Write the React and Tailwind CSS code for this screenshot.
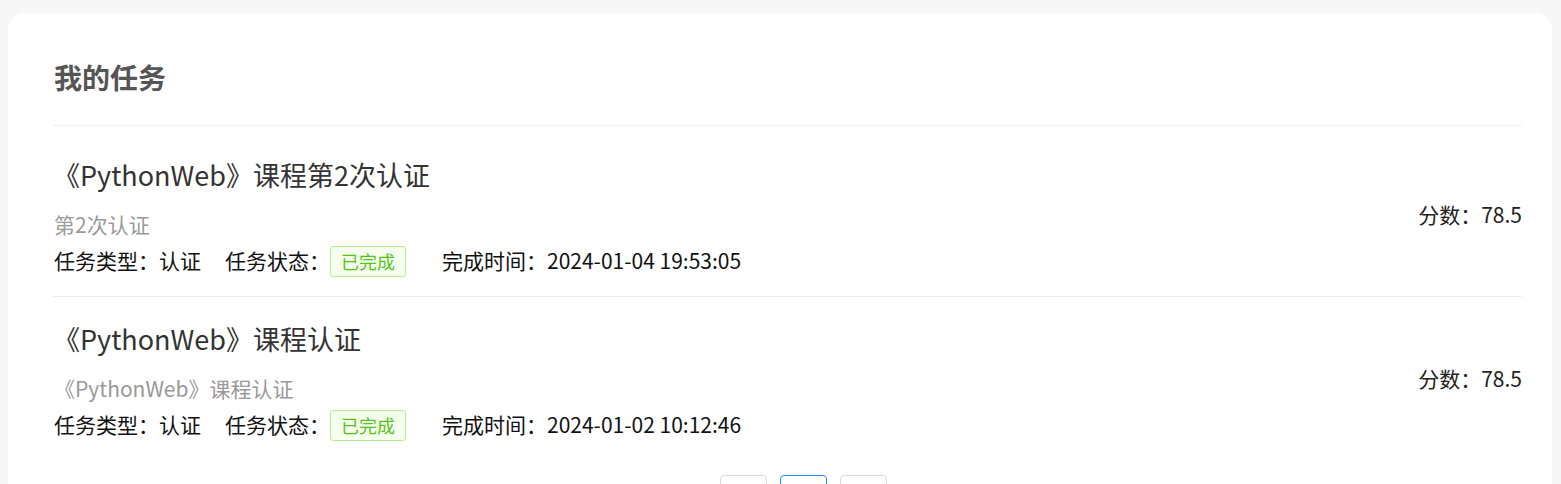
import React from "react";

const items = [
  {
    title: "《PythonWeb》课程第2次认证",
    sub: "第2次认证",
    type: "认证",
    time: "2024-01-04 19:53:05",
    score: "78.5",
  },
  {
    title: "《PythonWeb》课程认证",
    sub: "《PythonWeb》课程认证",
    type: "认证",
    time: "2024-01-02 10:12:46",
    score: "78.5",
  },
];

export default function App() {
  return (
    <div
      className="w-[1561px] h-[484px] overflow-hidden bg-[#f7f7f7] pt-[13px] pl-[8px] pr-[9px]"
      style={{ fontFamily: '"Noto Sans CJK SC", "Noto Sans", sans-serif' }}
    >
      <div className="bg-white rounded-[16px] pl-[45px] pr-[30px] h-[600px]">
        <div className="h-[113px] pt-[44px] border-b border-[#eeeeee]">
          <h1 className="text-[28px] leading-[40px] font-bold text-[#555555] ml-[1px]">
            我的任务
          </h1>
        </div>
        <div className="mt-[7px]">
          {items.map((it, i) => (
            <div
              key={i}
              className={
                "flex items-center justify-between pt-[24px] pb-[19px] " +
                (i === 0 ? "border-b border-[#eeeeee]" : "")
              }
            >
              <div className="flex flex-col">
                <div className="text-[27px] leading-[36px] text-[#333333]">{it.title}</div>
                <div className="mt-[16px] text-[21px] leading-[30px] text-[#999999] ml-[1px]">
                  {it.sub}
                </div>
                <div className="mt-[6px] h-[32px] flex items-center text-[21px] text-[#111111] ml-[1px]">
                  <span>任务类型：认证</span>
                  <span className="ml-[24px]">任务状态：</span>
                  <span className="h-[31px] px-[10px] flex items-center rounded-[3px] border border-[#b7eb8f] bg-[#f6ffed] text-[#52c41a] text-[18px]">
                    已完成
                  </span>
                  <span className="ml-[36px]">完成时间：{it.time}</span>
                </div>
              </div>
              <div className="text-[21px] text-[#222222] mb-[5px]">分数：{it.score}</div>
            </div>
          ))}
        </div>
        <div className="flex justify-center gap-[13px] pl-[32px] mt-[15px]">
          <div className="w-[47px] h-[32px] rounded-[4px] border border-[#d9d9d9]" />
          <div className="w-[47px] h-[32px] rounded-[4px] border border-[#1890ff]" />
          <div className="w-[47px] h-[32px] rounded-[4px] border border-[#d9d9d9]" />
        </div>
      </div>
    </div>
  );
}
